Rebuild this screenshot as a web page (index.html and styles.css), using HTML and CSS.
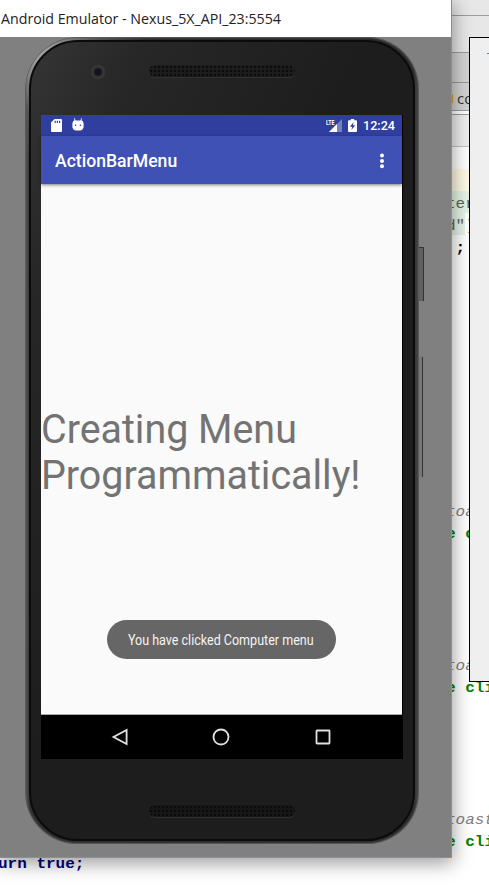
FILE: index.html
```html
<!DOCTYPE html>
<html lang="en">
<head>
<meta charset="utf-8">
<title>Android Emulator</title>
<link rel="stylesheet" href="styles.css">
</head>
<body>
<div class="desktop">
  <div class="ide">
    <div class="bar bar-menu"></div>
    <div class="bar bar-tools"></div>
    <div class="bar bar-nav"></div>
    <div class="bar bar-tabs"><i class="tab-icon"></i><span>co</span></div>
    <div class="bar bar-gap"></div>
    <div class="bar bar-crumbs"></div>
    <div class="code">
      <div class="line"></div>
      <div class="line current"></div>
      <div class="line injected indent"><span>ter</span></div>
      <div class="line indent"><span class="injected mark"><span>d"</span></span><span class="paren">)</span></div>
      <div class="line indent semi"><span>&nbsp;;</span></div>
      <div class="gap gap-first"></div>
      <div class="line indent comment"><span>toas</span></div>
      <div class="line indent string"><span>e cli</span></div>
      <div class="gap"></div>
      <div class="line indent comment"><span>toas</span></div>
      <div class="line indent string"><span>e cli</span></div>
      <div class="gap"></div>
      <div class="line indent comment"><span>toast</span></div>
      <div class="line indent string"><span>e cli</span></div>
      <div class="line keyword"><span>urn true;</span></div>
    </div>
  </div>

  <div class="window">
    <div class="titlebar"><span>Android Emulator - Nexus_5X_API_23:5554</span></div>
    <div class="stage">
      <div class="phone">
        <div class="face">
          <div class="forehead"><i class="camera"></i><i class="speaker"></i></div>
          <div class="screen">
            <div class="status">
              <svg class="sd" viewBox="0 0 11 13"><path fill="#fff" fill-rule="evenodd" d="M3.6 0H10a1 1 0 0 1 1 1v11a1 1 0 0 1-1 1H1a1 1 0 0 1-1-1V3.600zM3.600 1.700v2.400h1.200V1.700zm2.200 0v2.400H7V1.700zm2.200 0v2.400h1.200V1.700z"/></svg>
              <svg class="droid" viewBox="0 0 12 13"><path d="M2.400.2 3.200 3M9.600.2 8.800 3" stroke="#d8dbef" stroke-width="1"/><path fill="#fff" d="M1 3.500 2.300 2.200 4 2.600h4l1.700-.4L11 3.500l.6 2v4l-1.100 2-2 1h-5l-2-1-1.100-2v-4z"/><circle cx="3.600" cy="7.200" r=".8" fill="#303f9f"/><circle cx="8.400" cy="7.200" r=".8" fill="#303f9f"/></svg>
              <span class="spacer"></span>
              <span class="signal"><b>LTE</b><svg viewBox="0 0 16 13"><path fill="#7680be" d="M16 0v13H3z"/><path fill="#fff" d="M11 5V13H3z"/></svg></span>
              <svg class="battery" viewBox="0 0 9 13"><path fill="#fff" d="M2.800 0h3.400v1.200H8a1 1 0 0 1 1 1V12a1 1 0 0 1-1 1H1a1 1 0 0 1-1-1V2.200a1 1 0 0 1 1-1h1.800z"/><path fill="#303f9f" d="M5.600 3 1.900 7.800h2.300L3.400 11l3.800-4.700H4.900z"/></svg>
              <span class="clock">12:24</span>
            </div>
            <div class="appbar">
              <span class="app-title">ActionBarMenu</span>
              <svg class="more" viewBox="0 0 4 16"><circle cx="2" cy="2.500" r="2"/><circle cx="2" cy="8" r="2"/><circle cx="2" cy="13.300" r="2"/></svg>
            </div>
            <div class="content">
              <p class="headline">Creating Menu<br>Programmatically!</p>
              <div class="toast"><span>You have clicked Computer menu</span></div>
            </div>
            <div class="navbar">
              <svg viewBox="0 0 18 18"><path d="M15.600 2v14L2.500 9z"/></svg>
              <svg viewBox="0 0 18 18"><circle cx="9" cy="9" r="7.500"/></svg>
              <svg viewBox="0 0 18 18"><rect x="2.500" y="2.500" width="13" height="13" rx=".5"/></svg>
            </div>
          </div>
          <i class="speaker speaker-low"></i>
        </div>
      </div>
      <div class="side-keys"><i class="key power"></i><i class="key volume"></i></div>
    </div>
  </div>

  <div class="popup"><i></i></div>
</div>
</body>
</html>
```

FILE: styles.css
```css
* { box-sizing: border-box; }
body { margin: 0; background: #fff; }
svg { display: block; fill: none; }
i { display: block; }

.desktop { position: relative; width: 489px; height: 888px; overflow: hidden; }

/* IDE in the background */
.ide { width: 489px; }
.bar { background: #e7e7e7; border-bottom: 1px solid #9c9c9c; }
.bar-menu { height: 16px; }
.bar-tools { height: 37px; }
.bar-nav { height: 30px; background: #d3d3d3; }
.bar-tabs { height: 28px; background: #d3d3d3; display: flex; align-items: center; padding: 3px 0 0 448px; font: 15px "Open Sans", sans-serif; color: #333; }
.tab-icon { width: 5px; height: 9px; margin: 0 4px 0 0; background: #e8962e; }
.bar-gap { height: 4px; background: #fff; }
.bar-crumbs { height: 32px; background: #efefef; border-color: #c4c4c4; }
.code { font: 16px/22px "Liberation Mono", monospace; color: #5d665d; }
.line { height: 22px; white-space: pre; }
.line > span:not(.mark), .mark > span { display: inline-block; transform: translateY(2px) scaleY(.88); }
.indent { padding-left: 446px; }
.current { background: #fffae3; }
.injected { background: #e6f4e6; }
.mark { display: inline-block; height: 22px; vertical-align: top; }
.paren { color: #e8962e; }
.semi { color: #000; font-weight: 700; }
.comment { color: #808080; font-style: italic; }
.string { color: #008000; font-weight: 700; }
.keyword { color: #000080; font-weight: 700; margin-left: -2px; }
.gap { height: 110px; }
.gap-first { height: 242px; }

/* Emulator window */
.window { position: absolute; left: 0; top: 0; width: 452px; height: 858px; border: solid #e87528; border-width: 0 1px 1px 0; box-shadow: 0 4px 18px 1px rgba(0,0,0,.4); }
.titlebar { height: 37px; background: #fff; padding-left: 1px; font: 14.500px/37px "Open Sans", sans-serif; color: #222; white-space: nowrap; }
.titlebar span { display: inline-block; transform-origin: 0 50%; transform: scaleX(.98); }
.stage { display: flex; height: 820px; background: #808080; padding-left: 25px; }
.phone { width: 394px; height: 807px; padding: 3px 4px 3px 4px; border-radius: 52px; background: radial-gradient(circle at 12px 12px, #aaa 0, #999 14px, #555 60px, transparent 110px), linear-gradient(90deg, #5c5c5c 0, #303030 5px, #2c2c2c 388px, #4b4848 100%); box-shadow: inset 0 0 1px 1px #5c5c5c; }
.face { width: 386px; height: 801px; border: 2px solid #0b0b0b; border-radius: 49px; background: linear-gradient(115deg, #353535 0, #272727 15%, #1d1d1d 45%, #1d1d1d 100%); padding: 1px 0 0 10px; }
.forehead { height: 72px; display: flex; padding: 22px 0 0 50px; }
.camera { width: 14px; height: 14px; border-radius: 50%; margin-right: 44px; background: radial-gradient(circle, #14121c 0 3px, #282832 4px, #393939 6px); }
.speaker { width: 146px; height: 12px; border-radius: 6px; background: radial-gradient(circle, #080808 0 .6px, transparent 1.200px) 0 0 / 4px 4px, #1c1c1c; box-shadow: 0 1px 0 #303030; }
.speaker-low { margin: 46px 0 0 108px; background: radial-gradient(circle, #080808 0 .6px, transparent 1.200px) 0 0 / 4px 4px, #161616; }

/* Device screen */
.screen { width: 362px; height: 644px; display: flex; flex-direction: column; background: #000; font-family: Roboto, sans-serif; color: #fff; }
.status { height: 21px; width: 361px; background: #303f9f; display: flex; align-items: center; padding: 0 7px 0 10px; }
.sd { width: 11px; height: 13px; }
.droid { width: 12px; height: 13px; margin-left: 10px; margin-top: -2px; }
.spacer { flex: 1; }
.signal { display: flex; position: relative; }
.signal svg { width: 16px; height: 13px; }
.signal b { position: absolute; left: 0; top: 0; font: 700 8px/7px Roboto, sans-serif; transform: scaleX(.66); transform-origin: 0 0; }
.battery { width: 9px; height: 13px; margin: 0 6px 0 6px; }
.clock { font: 500 12.600px/21px Roboto, sans-serif; }
.appbar { height: 48px; width: 361px; background: #3f51b5; display: flex; align-items: center; justify-content: space-between; padding: 2px 18px 0 14px; box-shadow: 0 1px 3px rgba(0,0,0,.5); position: relative; }
.app-title { font: 500 17.600px/20px Roboto, sans-serif; }
.more { width: 4px; height: 16px; fill: #fff; }
.content { height: 531px; width: 361px; background: #fafafa; border-bottom: 1px solid #aaa; display: flex; flex-direction: column; align-items: center; }
.headline { align-self: stretch; margin: 223px 0 0; font: 40px/46px Roboto, sans-serif; color: #737373; white-space: nowrap; transform: scaleX(.985); transform-origin: 0 0; }
.toast { margin: 121px 1px 0 0; width: 229px; height: 39px; border-radius: 20px; background: #666; display: flex; align-items: center; justify-content: center; font: 14px/20px Roboto, sans-serif; color: #f4f4f4; white-space: nowrap; }
.toast span { transform: scaleX(.895); }
.navbar { height: 44px; display: flex; align-items: center; justify-content: center; gap: 83.500px; padding-right: 2px; stroke: #e0e0e0; stroke-width: 1.800px; }
.navbar svg { width: 18px; height: 18px; margin-top: -1px; }

.side-keys { padding-top: 210px; }
.key { background: #555; border-right: 1px solid #333; }
.power { width: 5px; height: 54px; border-top: 1px solid #333; background: #606060; }
.volume { width: 4px; height: 120px; margin-top: 56px; background: #777; }

/* Panel at the right edge */
.popup { position: absolute; left: 469px; top: 37px; width: 40px; height: 645px; background: #efefef; border: 1px solid #000; }
.popup i { margin: 15px 0 0 17px; height: 1px; background: #5b8297; }
```
